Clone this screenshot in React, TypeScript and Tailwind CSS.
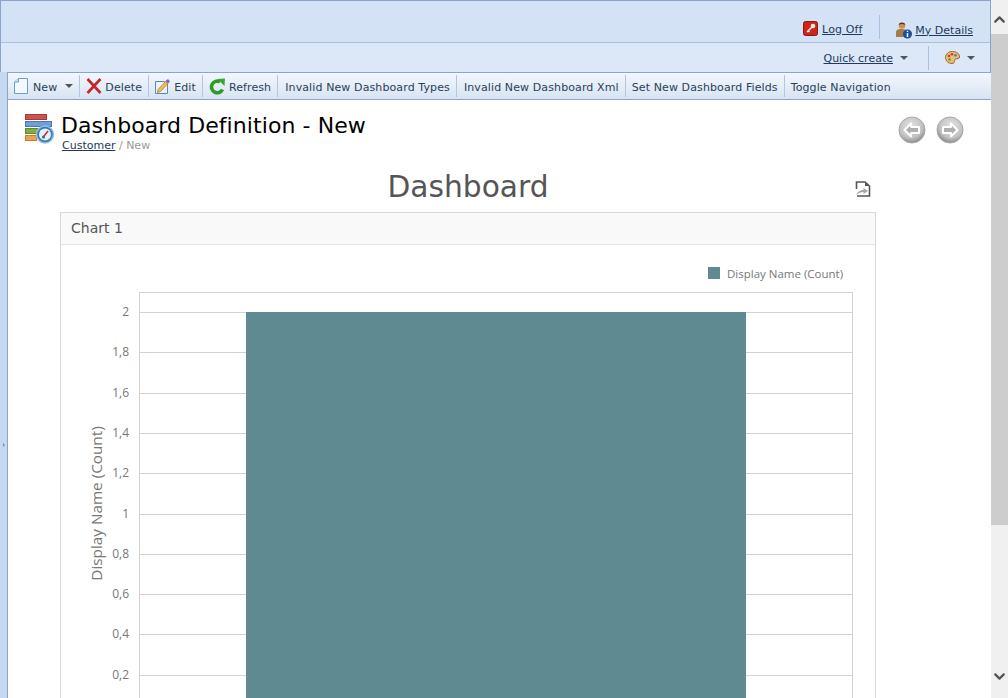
import { ChevronDown, ChevronUp } from "lucide-react";

const ticks = [
  { label: "2", y: 312 },
  { label: "1,8", y: 352 },
  { label: "1,6", y: 393 },
  { label: "1,4", y: 433 },
  { label: "1,2", y: 473 },
  { label: "1", y: 514 },
  { label: "0,8", y: 554 },
  { label: "0,6", y: 594 },
  { label: "0,4", y: 634 },
  { label: "0,2", y: 675 },
];

function Caret() {
  return <span className="inline-block h-0 w-0 border-x-[4px] border-t-[4px] border-x-transparent border-t-[#555]" />;
}

function Sep({ wide }: { wide?: boolean }) {
  return <span className={wide ? "ml-[3px] mr-[4px] h-[22px] w-px bg-[#b4c6dc]" : "mx-[3px] h-[22px] w-px bg-[#b4c6dc]"} />;
}

function NewIcon() {
  return (
    <svg width="16" height="18" viewBox="0 0 16 18">
      <path d="M4.5 1.5H13.5V16.5H0.5V5Z" fill="#f3f8fd" stroke="#6f9ccc" />
      <path d="M4.5 1.5V5H0.5" fill="#d5e4f4" stroke="#6f9ccc" />
    </svg>
  );
}

function DeleteIcon() {
  return (
    <svg width="16" height="16" viewBox="0 0 16 16">
      <path d="M1.5 1L14.5 15M14.5 1L1.5 15" stroke="#c4262b" strokeWidth="2.7" />
    </svg>
  );
}

function EditIcon() {
  return (
    <svg width="16" height="16" viewBox="0 0 16 16">
      <path d="M0.5 3.5H9L12.5 6V15.5H0.5Z" fill="#eaf2fb" stroke="#5d86b8" />
      <path d="M3 11.5L10.5 3.5L13 5.5L5.5 13.5L2.5 14.5Z" fill="#f0c048" stroke="#8a6a24" strokeWidth="0.6" />
      <path d="M10.5 3L13 1L15 3.5L13 5.5Z" fill="#8a5fc4" />
    </svg>
  );
}

function RefreshIcon() {
  return (
    <svg width="17" height="17" viewBox="0 0 17 17">
      <path d="M13.5 11.5A5.8 5.8 0 1 1 11 3.8" fill="none" stroke="#2f9a24" strokeWidth="3.6" />
      <path d="M8.5 1L16 0.5L15.5 8Z" fill="#3aa82d" />
    </svg>
  );
}

function LogOffIcon() {
  return (
    <svg width="15" height="15" viewBox="0 0 15 15">
      <rect x="0.5" y="0.5" width="14" height="14" rx="2" fill="#c8261e" stroke="#8e1710" />
      <circle cx="10" cy="5" r="2.3" fill="#f8e4dc" />
      <path d="M9 6L4 11M5 9.5L6.5 11" stroke="#f8e4dc" strokeWidth="1.6" />
    </svg>
  );
}

function DetailsIcon() {
  return (
    <svg width="18" height="18" viewBox="0 0 18 18">
      <circle cx="7" cy="4.5" r="3.3" fill="#c98f5e" />
      <path d="M3.7 3.8C4 1 10 1 10.3 3.8C8 2.8 6 2.8 3.7 3.8Z" fill="#4a2f1c" />
      <path d="M1 16V11C1 8.5 4 8 7 8C10 8 12 9 12 11V16Z" fill="#a87a4b" />
      <circle cx="12.5" cy="13" r="4.5" fill="#1c4d9c" />
      <path d="M12.5 9.8V11M12.5 12V16" stroke="#fff" strokeWidth="1.5" />
    </svg>
  );
}

function PaletteIcon() {
  return (
    <svg width="15" height="13" viewBox="0 0 15 13">
      <path d="M7.5 0.5C12 0.5 14.5 3 14.5 6C14.5 8 12 7.5 10.5 8C9 8.5 10.5 12.5 7 12.5C3 12.5 0.5 9.5 0.5 6.5C0.5 3 3.5 0.5 7.5 0.5Z" fill="#efbd70" stroke="#8c6a35" />
      <circle cx="4" cy="5" r="1.3" fill="#d8392c" />
      <circle cx="7" cy="3.2" r="1.3" fill="#d8392c" />
      <circle cx="10.5" cy="4.2" r="1.3" fill="#3d7dd0" />
      <circle cx="4.5" cy="8.5" r="1.3" fill="#47a33c" />
    </svg>
  );
}

function DashboardIcon() {
  return (
    <svg width="32" height="32" viewBox="0 0 32 32">
      <rect x="1.5" y="1.5" width="21" height="5" fill="#d0524c" stroke="#a33a36" />
      <rect x="1.5" y="8.5" width="26" height="5" fill="#6f9fd8" stroke="#4a78b0" />
      <rect x="1.5" y="15.5" width="21" height="5" fill="#7faf3f" stroke="#5c8a2a" />
      <rect x="1.5" y="22.5" width="11" height="5" fill="#eda04f" stroke="#c67d30" />
      <circle cx="21" cy="21.5" r="8.5" fill="#2f7fc0" stroke="#9fbcdc" strokeWidth="1.5" />
      <circle cx="21" cy="21.5" r="6" fill="#e9f1f9" />
      <path d="M18.5 25L24 18" stroke="#c2352c" strokeWidth="1.6" />
      <circle cx="19.5" cy="24" r="1.6" fill="#3f6a99" />
    </svg>
  );
}

function NavArrow({ flip }: { flip?: boolean }) {
  return (
    <svg width="28" height="28" viewBox="0 0 28 28" style={{ transform: flip ? "scaleX(-1)" : undefined }}>
      <defs>
        <radialGradient id="navFill" cx="0.45" cy="0.35" r="0.75">
          <stop offset="0" stopColor="#e4e4e4" />
          <stop offset="0.6" stopColor="#c2c2c2" />
          <stop offset="1" stopColor="#6f6f6f" />
        </radialGradient>
      </defs>
      <circle cx="14" cy="14" r="13" fill="url(#navFill)" stroke="#a8a8a8" />
      <path d="M6.5 14L13 7.5V11H21V17H13V20.5Z" fill="#b0b0b0" stroke="#fff" strokeWidth="2" strokeLinejoin="round" />
    </svg>
  );
}

function ExportIcon() {
  return (
    <svg width="16" height="16" viewBox="0 0 16 16">
      <path d="M1.5 8V1H10L14.5 5V15H2" fill="#fff" stroke="#555" strokeWidth="1.6" />
      <path d="M10 1V5H14.5Z" fill="#555" />
      <path d="M1 14C3 10 6 9 8.5 9V7L13 10L8.5 13V11C6 11 3.5 12 1 14Z" fill="#a5a5a5" />
    </svg>
  );
}

function ToolItem({ icon, label, caret }: { icon?: React.ReactNode; label: string; caret?: boolean }) {
  return (
    <div className="flex items-center px-[3px]">
      {icon}
      <span className={icon ? "ml-[3px] pt-[4px]" : "pt-[4px]"}>{label}</span>
      {caret && <span className="mb-[1px] ml-[8px] flex"><Caret /></span>}
    </div>
  );
}

function Chart() {
  return (
    <svg width="814" height="453" viewBox="61 245 814 453" className="block" style={{ fontFamily: "'Open Sans', sans-serif" }}>
      <rect x="708" y="267" width="12" height="12" fill="#5f8a91" />
      <text x="727" y="278" fontSize="11.5" fill="#777">Display Name (Count)</text>
      <rect x="139.5" y="292.5" width="713" height="420" fill="none" stroke="#d2d2d2" />
      {ticks.map((t) => (
        <g key={t.label}>
          <line x1="139" x2="853" y1={t.y + 0.5} y2={t.y + 0.5} stroke="#d2d2d2" />
          <text x="129" y={t.y + 4} fontSize="12" fill="#777" textAnchor="end">{t.label}</text>
        </g>
      ))}
      <rect x="246" y="312" width="500" height="400" fill="#5f8a91" />
      <text transform="translate(102 503.5) rotate(-90)" fontSize="15.3" fill="#777" textAnchor="middle">Display Name (Count)</text>
    </svg>
  );
}

export default function App() {
  return (
    <div className="flex h-[698px] w-[1008px] overflow-hidden bg-white text-[11px] text-[#2b3f55]" style={{ fontFamily: "'DejaVu Sans', Verdana, sans-serif" }}>
      <div className="flex min-w-0 flex-1 flex-col">
        <header className="border border-b-0 border-[#8aa4cb] bg-[#d3e3f5]">
          <div className="flex h-[42px] items-end justify-end border-b border-[#a9c0de] pb-[3px] pr-[17px]">
            <div className="flex items-center gap-[4px] pb-[1px]">
              <LogOffIcon />
              <a className="pt-[2px] tracking-[0.1px] text-[#1f3a5c] underline">Log Off</a>
            </div>
            <span className="ml-[17px] mr-[15px] h-[24px] w-px bg-[#a9c0de]" />
            <div className="flex items-center gap-[2px]">
              <DetailsIcon />
              <a className="pt-[2px] text-[#1f3a5c] underline">My Details</a>
            </div>
          </div>
          <div className="flex h-[29px] items-center justify-end bg-[#dce8f7] pr-[15px]">
            <a className="pt-[4px] text-[#1f3a5c] underline">Quick create</a>
            <span className="ml-[7px] flex"><Caret /></span>
            <span className="ml-[20px] mr-[16px] h-[24px] w-px bg-[#a9c0de]" />
            <PaletteIcon />
            <span className="ml-[7px] flex"><Caret /></span>
          </div>
        </header>
        <div className="flex min-h-0 flex-1">
          <div className="flex w-[8px] shrink-0 items-center justify-center border-r border-[#8aa4cb] bg-[#c5d8f1] pt-[120px]">
            <span className="h-0 w-0 border-y-[2px] border-l-[2px] border-y-transparent border-l-[#6f8fb8]" />
          </div>
          <div className="flex min-w-0 flex-1 flex-col">
            <nav className="flex h-[28px] items-center gap-0 border-y border-[#8aa4cb] bg-gradient-to-b from-[#f2f7fe] to-[#d7e4f3] pl-[3px] tracking-[0.11px]">
              <ToolItem icon={<NewIcon />} label="New" caret />
              <Sep />
              <ToolItem icon={<DeleteIcon />} label="Delete" />
              <Sep />
              <ToolItem icon={<EditIcon />} label="Edit" />
              <Sep />
              <ToolItem icon={<RefreshIcon />} label="Refresh" />
              <Sep wide />
              <ToolItem label="Invalid New Dashboard Types" />
              <Sep wide />
              <ToolItem label="Invalid New Dashboard Xml" />
              <Sep />
              <ToolItem label="Set New Dashboard Fields" />
              <Sep />
              <ToolItem label="Toggle Navigation" />
            </nav>
            <main className="min-h-0 flex-1 overflow-hidden bg-white">
              <div className="flex h-[62px] items-start pl-[16px] pr-[27px] pt-[13px]">
                <DashboardIcon />
                <div className="ml-[5px]">
                  <h1 className="text-[22px] leading-[26px] tracking-[0.08px] text-black">Dashboard Definition - New</h1>
                  <p className="ml-[1px] text-[11px] leading-[13px] text-[#999]">
                    <a className="text-[#1f3a5c] underline">Customer</a> / New
                  </p>
                </div>
                <div className="ml-auto flex gap-[10px] pt-[3px]">
                  <NavArrow />
                  <NavArrow flip />
                </div>
              </div>
              <div className="relative ml-[52px] w-[816px]">
                <h2 className="h-[50px] text-center text-[29.7px] leading-[49px] text-[#555]">Dashboard</h2>
                <span className="absolute right-[5px] top-[19px]"><ExportIcon /></span>
                <section className="border border-[#d8d8d8]">
                  <div className="flex h-[32px] items-center border-b border-[#e4e4e4] bg-[#f9f9f9] pl-[10px] text-[14px] text-[#555]">Chart 1</div>
                  <Chart />
                </section>
              </div>
            </main>
          </div>
        </div>
      </div>
      <aside className="flex w-[17px] shrink-0 flex-col items-center bg-[#f0f0f0]">
        <ChevronUp size={17} strokeWidth={3.2} className="mb-[6px] mt-[11px] text-[#555]" />
        <div className="h-[491px] w-full bg-[#cdcdcd]" />
        <ChevronDown size={17} strokeWidth={3.2} className="mb-[13px] mt-auto text-[#555]" />
      </aside>
    </div>
  );
}
